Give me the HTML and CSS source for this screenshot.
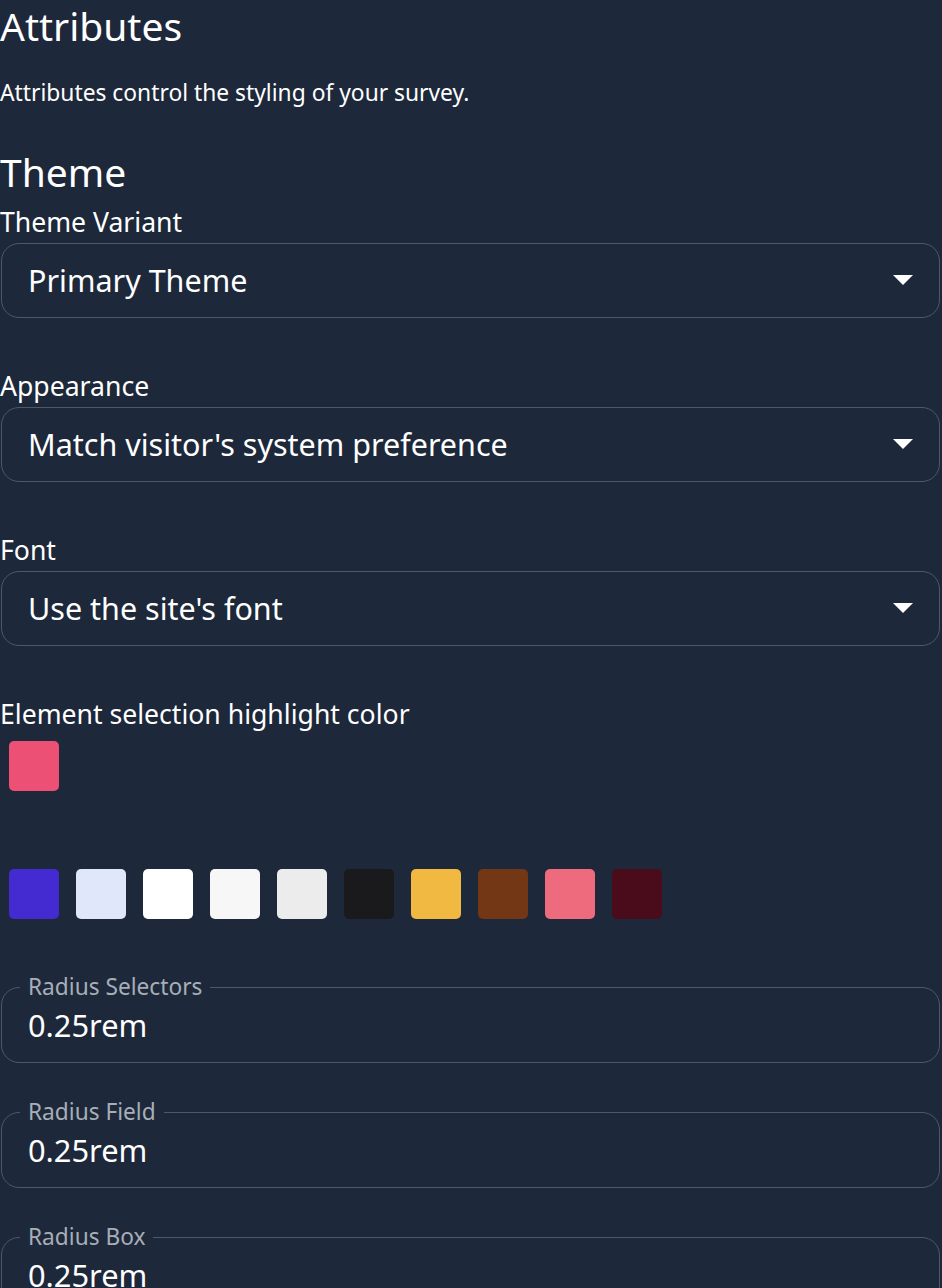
FILE: index.html
```html
<!DOCTYPE html>
<html lang="en">
<head>
<meta charset="utf-8">
<title>Attributes</title>
<link rel="stylesheet" href="styles.css">
</head>
<body>
<main class="page">
  <h1 class="title">Attributes</h1>
  <p class="desc">Attributes control the styling of your survey.</p>

  <h2 class="section">Theme</h2>

  <div class="field">
    <div class="label">Theme Variant</div>
    <div class="select"><span>Primary Theme</span><span class="caret"></span></div>
  </div>

  <div class="field">
    <div class="label">Appearance</div>
    <div class="select"><span>Match visitor's system preference</span><span class="caret"></span></div>
  </div>

  <div class="field">
    <div class="label">Font</div>
    <div class="select"><span>Use the site's font</span><span class="caret"></span></div>
  </div>

  <div class="field">
    <div class="label">Element selection highlight color</div>
    <div class="swatches single">
      <span class="swatch" style="background:#ec5075"></span>
    </div>
  </div>

  <div class="swatches palette">
    <span class="swatch" style="background:#432ad1"></span>
    <span class="swatch" style="background:#e0e7fb"></span>
    <span class="swatch" style="background:#ffffff"></span>
    <span class="swatch" style="background:#f7f7f7"></span>
    <span class="swatch" style="background:#ececec"></span>
    <span class="swatch" style="background:#1a1a1d"></span>
    <span class="swatch" style="background:#f2b942"></span>
    <span class="swatch" style="background:#733716"></span>
    <span class="swatch" style="background:#ee6b7d"></span>
    <span class="swatch" style="background:#4a0b1b"></span>
  </div>

  <fieldset class="outlined">
    <legend>Radius Selectors</legend>
    <div class="value">0.25rem</div>
  </fieldset>

  <fieldset class="outlined">
    <legend>Radius Field</legend>
    <div class="value">0.25rem</div>
  </fieldset>

  <fieldset class="outlined">
    <legend>Radius Box</legend>
    <div class="value">0.25rem</div>
  </fieldset>
</main>
</body>
</html>
```

FILE: styles.css
```css
html, body {
  margin: 0;
  padding: 0;
  background: #1d283a;
}

body {
  color: #ffffff;
  font-family: "Noto Sans", "Open Sans", sans-serif;
}

.page {
  display: flex;
  flex-direction: column;
  padding: 0 2px 0 0;
}

.title {
  font-size: 39px;
  font-weight: 400;
  line-height: 48px;
  margin: 2px 0 0 0;
}

.desc {
  font-size: 22.8px;
  line-height: 28px;
  margin: 29px 0 0 0;
}

.section {
  font-size: 39px;
  font-weight: 400;
  line-height: 48px;
  margin: 41px 0 0 0;
}

.field {
  display: flex;
  flex-direction: column;
}

.section + .field {
  margin-top: 10px;
}

.field + .field {
  margin-top: 52.5px;
}

.label {
  font-size: 26.6px;
  line-height: 32px;
}

.select {
  margin: 4.5px 0 0 1px;
  height: 75px;
  box-sizing: border-box;
  border: 1.5px solid #4d5869;
  border-radius: 18px;
  display: flex;
  align-items: center;
  justify-content: space-between;
  padding: 0 26px 0 26px;
  font-size: 30.5px;
}

.caret {
  width: 0;
  height: 0;
  border-left: 10px solid transparent;
  border-right: 10px solid transparent;
  border-top: 10px solid #ffffff;
}

.swatches {
  display: flex;
  gap: 17px;
  padding-left: 9px;
}

.swatches.single {
  margin-top: 11px;
}

.swatches.palette {
  margin-top: 78px;
}

.swatch {
  width: 50px;
  height: 50px;
  border-radius: 5px;
  display: block;
}

.outlined {
  margin: 54px 0 0 1px;
  padding: 0 26px 19px 26px;
  border: 1.5px solid #4d5869;
  border-radius: 18px;
  min-width: 0;
}

.outlined + .outlined {
  margin-top: 35px;
}

.outlined legend {
  font-size: 22.7px;
  line-height: 28px;
  color: #a7aeb8;
  padding: 0 8px;
  margin-left: -8px;
}

.value {
  font-size: 30.8px;
  line-height: 36px;
  margin-top: 6px;
}
```
